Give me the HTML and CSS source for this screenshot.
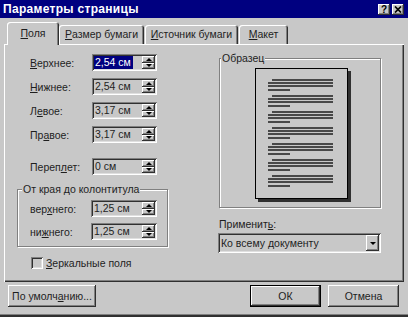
FILE: index.html
```html
<!DOCTYPE html>
<html lang="ru">
<head>
<meta charset="UTF-8">
<title>Параметры страницы</title>
<link rel="stylesheet" href="styles.css">
</head>
<body>
<div class="window">
    <!-- заголовок окна -->
    <div class="titlebar">
        <span class="title">Параметры страницы</span>
        <div class="title-buttons">
            <span class="title-btn">?</span>
            <span class="title-btn">
                <svg width="8" height="7" viewBox="0 0 8 7"><path d="M1 0.5l6 6M7 0.5l-6 6" stroke="#000" stroke-width="1.7" fill="none"/></svg>
            </span>
        </div>
    </div>

    <div class="dialog">
        <!-- вкладки -->
        <div class="tabs">
            <div class="tab tab-active tab-fields"><u>П</u>оля</div>
            <div class="tab tab-size"><u>Р</u>азмер бумаги</div>
            <div class="tab tab-source"><u>И</u>сточник бумаги</div>
            <div class="tab tab-layout"><u>М</u>акет</div>
        </div>

        <div class="panel">
            <!-- поля -->
            <div class="col-left">
                <div class="field-row">
                    <span class="field-label"><u>В</u>ерхнее:</span>
                    <div class="spin">
                        <div class="spin-text"><span class="selected">2,54 см</span></div>
                        <div class="spin-btns"><span class="spin-up"></span><span class="spin-down"></span></div>
                    </div>
                </div>
                <div class="field-row">
                    <span class="field-label"><u>Н</u>ижнее:</span>
                    <div class="spin">
                        <div class="spin-text">2,54 см</div>
                        <div class="spin-btns"><span class="spin-up"></span><span class="spin-down"></span></div>
                    </div>
                </div>
                <div class="field-row">
                    <span class="field-label">Л<u>е</u>вое:</span>
                    <div class="spin">
                        <div class="spin-text">3,17 см</div>
                        <div class="spin-btns"><span class="spin-up"></span><span class="spin-down"></span></div>
                    </div>
                </div>
                <div class="field-row field-row-last">
                    <span class="field-label">Пр<u>а</u>вое:</span>
                    <div class="spin">
                        <div class="spin-text">3,17 см</div>
                        <div class="spin-btns"><span class="spin-up"></span><span class="spin-down"></span></div>
                    </div>
                </div>
                <div class="field-row">
                    <span class="field-label">Переп<u>л</u>ет:</span>
                    <div class="spin">
                        <div class="spin-text">0 см</div>
                        <div class="spin-btns"><span class="spin-up"></span><span class="spin-down"></span></div>
                    </div>
                </div>

                <fieldset class="group group-header">
                    <legend>От края до колонтитула</legend>
                    <div class="field-row">
                        <span class="field-label">вер<u>х</u>него:</span>
                        <div class="spin">
                            <div class="spin-text">1,25 см</div>
                            <div class="spin-btns"><span class="spin-up"></span><span class="spin-down"></span></div>
                        </div>
                    </div>
                    <div class="field-row">
                        <span class="field-label">ни<u>ж</u>него:</span>
                        <div class="spin">
                            <div class="spin-text">1,25 см</div>
                            <div class="spin-btns"><span class="spin-up"></span><span class="spin-down"></span></div>
                        </div>
                    </div>
                </fieldset>

                <div class="check-row">
                    <span class="checkbox"></span>
                    <span><u>З</u>еркальные поля</span>
                </div>
            </div>

            <!-- образец -->
            <div class="col-right">
                <fieldset class="group group-sample">
                    <legend>Образец</legend>
                    <div class="page">
                        <div class="para"><i class="ln ln-first"></i><i class="ln"></i><i class="ln"></i><i class="ln ln-short"></i></div>
                        <div class="para"><i class="ln ln-first"></i><i class="ln"></i><i class="ln"></i><i class="ln ln-short"></i></div>
                        <div class="para"><i class="ln ln-first"></i><i class="ln"></i><i class="ln"></i><i class="ln ln-short"></i></div>
                        <div class="para"><i class="ln ln-first"></i><i class="ln"></i><i class="ln"></i><i class="ln ln-short"></i></div>
                        <div class="para"><i class="ln ln-first"></i><i class="ln"></i><i class="ln"></i><i class="ln ln-short"></i></div>
                        <div class="para"><i class="ln ln-first"></i><i class="ln"></i><i class="ln"></i><i class="ln ln-short"></i></div>
                        <div class="para"><i class="ln ln-first"></i><i class="ln"></i><i class="ln"></i><i class="ln ln-short"></i></div>
                    </div>
                </fieldset>

                <div class="apply-label">Применит<u>ь</u>:</div>
                <div class="combo">
                    <span class="combo-text">Ко всему документу</span>
                    <span class="combo-btn"></span>
                </div>
            </div>
        </div>

        <!-- кнопки -->
        <div class="footer">
            <button class="btn btn-default-set">По умолч<u>а</u>нию...</button>
            <div class="footer-right">
                <button class="btn btn-ok">ОК</button>
                <button class="btn">Отмена</button>
            </div>
        </div>
    </div>
</div>
</body>
</html>
```

FILE: styles.css
```css
/* общие */
* {
    box-sizing: border-box;
}

body, html {
    margin: 0;
    padding: 0;
}

body {
    width: 408px;
    height: 317px;
    overflow: hidden;
    background: #c8c8c8;
    font-family: "Liberation Sans", Arial, sans-serif;
    font-size: 10.5px;
    color: #1e1e1e;
}

.window {
    width: 408px;
    height: 317px;
    background: #c8c8c8;
    display: flex;
    flex-direction: column;
    box-shadow: inset 0 -2px #303030, inset 0 -3px #808080;
}

/* заголовок */
.titlebar {
    height: 18px;
    background: #000080;
    display: flex;
    align-items: center;
    justify-content: space-between;
    padding: 0 4px 0 3px;
}

.title {
    color: #fff;
    font-weight: bold;
    font-size: 12px;
    letter-spacing: 0.3px;
}

.title-buttons {
    display: flex;
    gap: 2px;
}

.title-btn {
    width: 12px;
    height: 11px;
    background: #c8c8c8;
    box-shadow: inset -1px -1px #303030, inset 1px 1px #fff, inset -2px -2px #808080;
    display: flex;
    align-items: center;
    justify-content: center;
    font-weight: bold;
    font-size: 10px;
    line-height: 11px;
    color: #000;
}

/* диалог */
.dialog {
    flex: 1;
    padding: 0 4px;
    display: flex;
    flex-direction: column;
}

.tabs {
    height: 26px;
    display: flex;
    align-items: flex-end;
    padding-left: 3px;
    position: relative;
    z-index: 1;
}

.tab {
    height: 19px;
    display: flex;
    align-items: center;
    justify-content: center;
    background: #c8c8c8;
    border-radius: 3px 3px 0 0;
    box-shadow: inset 1px 1px #fff, inset -1px 0 #303030, inset -2px 0 #808080;
    padding-bottom: 1px;
}

.tab-active {
    height: 23px;
    margin-bottom: -1px;
    padding-bottom: 2px;
}

.tab-fields { width: 52px; }
.tab-size { width: 85px; }
.tab-source { width: 93px; margin-left: 1px; }
.tab-layout { width: 49px; margin-left: 1px; }

.panel {
    height: 238px;
    display: flex;
    box-shadow: inset 1px 1px #fff, inset -1px -1px #303030, inset -2px -2px #808080;
}

/* левая колонка */
.col-left {
    width: 214px;
    padding: 10px 0 0 13px;
}

.field-row {
    display: flex;
    align-items: center;
    height: 17px;
    margin: 0 0 7px 13px;
}

.field-row-last {
    margin-bottom: 15px;
}

.field-label {
    width: 62px;
}

.spin {
    width: 65px;
    height: 17px;
    display: flex;
    padding: 2px;
    box-shadow: inset 1px 1px #808080, inset -1px -1px #fff, inset 2px 2px #303030, inset -2px -2px #dfdfdf;
}

.spin-text {
    flex: 1;
    display: flex;
    align-items: center;
    padding-left: 1px;
    line-height: 13px;
}

.selected {
    background: #000080;
    color: #fff;
    padding: 0 2px 0 1px;
    margin-left: -1px;
}

.spin-btns {
    width: 13px;
    display: flex;
    flex-direction: column;
}

.spin-up, .spin-down {
    flex: 1;
    display: flex;
    align-items: center;
    justify-content: center;
    box-shadow: inset -1px -1px #303030, inset 1px 1px #fff, inset -2px -2px #808080;
}

.spin-up::after {
    content: "";
    border-left: 3px solid transparent;
    border-right: 3px solid transparent;
    border-bottom: 3px solid #000;
}

.spin-down::after {
    content: "";
    border-left: 3px solid transparent;
    border-right: 3px solid transparent;
    border-top: 3px solid #000;
}

/* рамки групп */
.group {
    margin: 0;
    min-width: 0;
    border: 1px solid #808080;
    box-shadow: inset 1px 1px #fff, 1px 1px #fff;
}

.group legend {
    padding: 0 1px;
    line-height: 13px;
    background: #c8c8c8;
}

.group-header {
    width: 151px;
    margin-top: 8px;
    padding: 4px 0 6px 4px;
}

.group-header .field-row {
    margin-left: 8px;
    margin-bottom: 6px;
}

.group-header .field-row:last-child {
    margin-bottom: 0;
}

.group-header .field-label {
    width: 61px;
}

.group-header .spin {
    width: 66px;
}

.check-row {
    display: flex;
    align-items: center;
    gap: 3px;
    margin: 10px 0 0 14px;
}

.checkbox {
    width: 12px;
    height: 12px;
    box-shadow: inset 1px 1px #808080, inset -1px -1px #fff, inset 2px 2px #303030, inset -2px -2px #dfdfdf;
}

/* правая колонка */
.col-right {
    width: 164px;
    padding: 8px 0 0 1px;
}

.group-sample {
    width: 162px;
    padding: 3px 0 8px 1px;
}

.page {
    width: 93px;
    height: 131px;
    margin-left: 34px;
    border: 1px solid #000;
    box-shadow: 3px 3px 0 #303030;
    padding: 10px 0 0 12px;
    display: flex;
    flex-direction: column;
    gap: 4px;
}

.para {
    display: flex;
    flex-direction: column;
    gap: 1px;
}

.ln {
    display: block;
    width: 65px;
    height: 2px;
    background: #484848;
}

.ln-first {
    width: 61px;
    margin-left: 4px;
}

.ln-short {
    width: 22px;
    margin-top: 1px;
}

.apply-label {
    margin-top: 10px;
    line-height: 13px;
}

.combo {
    width: 163px;
    height: 20px;
    margin: 2px 0 0 -1px;
    padding: 2px;
    display: flex;
    align-items: center;
    box-shadow: inset 1px 1px #808080, inset -1px -1px #fff, inset 2px 2px #303030, inset -2px -2px #dfdfdf;
}

.combo-text {
    flex: 1;
    padding-left: 1px;
}

.combo-btn {
    width: 13px;
    height: 16px;
    display: flex;
    align-items: center;
    justify-content: center;
    box-shadow: inset -1px -1px #303030, inset 1px 1px #fff, inset -2px -2px #808080;
}

.combo-btn::after {
    content: "";
    border-left: 3px solid transparent;
    border-right: 3px solid transparent;
    border-top: 3px solid #000;
}

/* кнопки внизу */
.footer {
    display: flex;
    justify-content: space-between;
    margin-top: 3px;
    padding: 0 5px 0 4px;
}

.footer-right {
    display: flex;
    gap: 7px;
}

.btn {
    height: 22px;
    width: 71px;
    padding: 0;
    border: none;
    background: #c8c8c8;
    font-family: "Liberation Sans", Arial, sans-serif;
    font-size: 10.5px;
    color: #1e1e1e;
    box-shadow: inset -1px -1px #303030, inset 1px 1px #fff, inset -2px -2px #808080;
}

.btn-default-set {
    width: 88px;
}

.btn-ok {
    box-shadow: inset 0 0 0 1px #000, inset -2px -2px #303030, inset 2px 2px #fff, inset -3px -3px #808080;
}
```
